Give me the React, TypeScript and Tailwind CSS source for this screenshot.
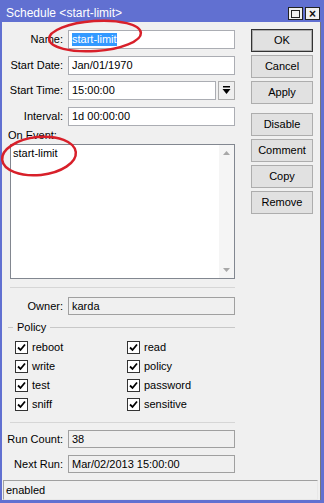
import React from "react";

const font = { fontFamily: '"Liberation Sans", Arial, sans-serif' };

function Label({ children }: { children: React.ReactNode }) {
  return <div className="w-[62px] shrink-0 text-right pr-[1px]">{children}</div>;
}

function Field({
  label,
  value,
  disabled,
  h = "h-[19px]",
  className = "",
}: {
  label: string;
  value: React.ReactNode;
  disabled?: boolean;
  h?: string;
  className?: string;
}) {
  return (
    <div className={`flex items-center gap-[4px] ${className}`}>
      <Label>{label}</Label>
      <div
        className={`w-[167px] ${h} flex items-center px-[3px] border ${
          disabled ? "bg-[#f0f0f0] border-[#a0a0a0]" : "bg-white border-[#abadb3]"
        }`}
      >
        {value}
      </div>
    </div>
  );
}

function Btn({ children, def, className = "" }: { children: React.ReactNode; def?: boolean; className?: string }) {
  return (
    <div
      className={`w-[62px] h-[23px] flex items-center justify-center bg-[#e1e1e1] ${
        def ? "border border-[#333] shadow-[inset_0_0_0_1px_#adadad]" : "border border-[#adadad]"
      } ${className}`}
    >
      {children}
    </div>
  );
}

function Check({ label }: { label: string }) {
  return (
    <div className="flex items-center gap-[4px] h-[19px]">
      <div className="w-[13px] h-[13px] bg-white border border-[#333] flex items-center justify-center">
        <svg width="9" height="9" viewBox="0 0 9 9">
          <path d="M1 4.5 L3.5 7 L8 1.5" stroke="#000" strokeWidth="1.8" fill="none" />
        </svg>
      </div>
      <span>{label}</span>
    </div>
  );
}

export default function App() {
  return (
    <div
      className="relative w-[324px] h-[503px] flex flex-col bg-[#6170d1] text-[11px] leading-[13px] text-black overflow-hidden"
      style={font}
    >
      {/* title bar */}
      <div className="h-[22px] shrink-0 flex items-center justify-between pl-[6px] pr-[4px] text-white text-[12px]">
        <span className="mt-[5px]">Schedule &lt;start-limit&gt;</span>
        <div className="flex gap-[2px] mt-[5px]">
          <div className="w-[15px] h-[13px] bg-[#f0f0f0] border border-[#222] flex items-center justify-center">
            <div className="w-[9px] h-[8px] border border-[#222]" />
          </div>
          <div className="w-[15px] h-[13px] bg-[#f0f0f0] border border-[#222] flex items-center justify-center text-[#111] text-[12px] font-bold leading-none">
            ×
          </div>
        </div>
      </div>

      {/* body */}
      <div className="flex-1 flex flex-col ml-[2px] mr-[3px] mb-[3px] bg-[#f0f0f0] border-r border-[#777]">
        <div className="flex-1 flex">
          {/* left */}
          <div className="w-[245px] flex flex-col pt-[8px]">
            <Field
              label="Name:"
              value={<span className="bg-[#3399ff] text-white px-[0px]">start-limit</span>}
            />
            <Field label="Start Date:" value="Jan/01/1970" className="mt-[7px]" />
            <div className="flex items-center gap-[4px] mt-[6px]">
              <Label>Start Time:</Label>
              <div className="w-[148px] h-[19px] flex items-center px-[3px] bg-white border border-[#abadb3]">
                15:00:00
              </div>
              <div className="w-[17px] h-[19px] ml-[-2px] bg-[#f0f0f0] border border-[#adadad] flex items-center justify-center">
                <svg width="9" height="9" viewBox="0 0 9 9">
                  <rect x="1" y="0" width="7" height="1.5" fill="#000" />
                  <path d="M0.5 3 H8.5 L4.5 8 Z" fill="#000" />
                </svg>
              </div>
            </div>
            <Field label="Interval:" value="1d 00:00:00" className="mt-[7px]" />

            <div className="mt-[3px] pl-[6px]">On Event:</div>
            <div className="mt-[2px] ml-[8px] w-[225px] h-[135px] bg-white border border-[#828790] flex">
              <div className="flex-1 pl-[2px] pt-[2px]">start-limit</div>
              <div className="w-[15px] bg-[#f5f5f5] flex flex-col items-center justify-between py-[6px]">
                <svg width="7" height="4" viewBox="0 0 7 4">
                  <path d="M0 4 L3.5 0 L7 4 Z" fill="#a8a8a8" />
                </svg>
                <svg width="7" height="4" viewBox="0 0 7 4">
                  <path d="M0 0 L3.5 4 L7 0 Z" fill="#a8a8a8" />
                </svg>
              </div>
            </div>

            <div className="mt-[8px] ml-[8px] w-[225px] border-t border-[#d6d6d6]" />
            <Field label="Owner:" value="karda" disabled h="h-[18px]" className="mt-[9px]" />

            <div className="mt-[6px] ml-[6px] w-[227px] flex items-center h-[13px]">
              <div className="w-[5px] border-t border-[#c8c8c8]" />
              <span className="px-[4px]">Policy</span>
              <div className="flex-1 border-t border-[#c8c8c8]" />
            </div>

            <div className="mt-[4px] ml-[13px] grid grid-cols-[112px_1fr]">
              <Check label="reboot" />
              <Check label="read" />
              <Check label="write" />
              <Check label="policy" />
              <Check label="test" />
              <Check label="password" />
              <Check label="sniff" />
              <Check label="sensitive" />
            </div>

            <div className="mt-[8px] ml-[8px] w-[225px] border-t border-[#d6d6d6]" />
            <Field label="Run Count:" value="38" disabled h="h-[18px]" className="mt-[7px]" />
            <Field label="Next Run:" value="Mar/02/2013 15:00:00" disabled h="h-[18px]" className="mt-[7px]" />
          </div>

          {/* right buttons */}
          <div className="flex flex-col pt-[7px] ml-[4px] gap-[3px]">
            <Btn def>OK</Btn>
            <Btn>Cancel</Btn>
            <Btn>Apply</Btn>
            <Btn className="mt-[6px]">Disable</Btn>
            <Btn>Comment</Btn>
            <Btn>Copy</Btn>
            <Btn>Remove</Btn>
          </div>
        </div>

        {/* status bar */}
        <div className="h-[20px] ml-[1px] mr-[2px] mb-[0px] flex items-center pl-[2px] border border-[#a0a0a0] border-r-[#e8e8e8] border-b-[#e8e8e8]">
          enabled
        </div>
      </div>

      {/* red annotation ellipses */}
      <svg className="absolute left-0 top-0 pointer-events-none" width="324" height="503">
        <ellipse cx="95" cy="36" rx="46" ry="15" transform="rotate(-4 95 36)" fill="none" stroke="#d8202a" strokeWidth="2.5" />
        <ellipse cx="39" cy="156" rx="37" ry="19" transform="rotate(-6 39 156)" fill="none" stroke="#d8202a" strokeWidth="2.5" />
      </svg>
    </div>
  );
}
